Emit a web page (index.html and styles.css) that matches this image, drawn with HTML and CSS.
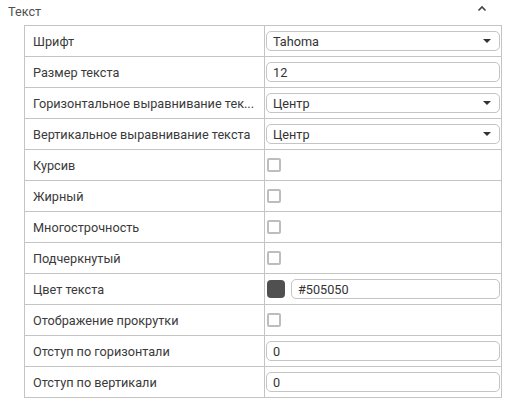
FILE: index.html
```html
<!DOCTYPE html>
<html lang="ru">
<head>
<meta charset="utf-8">
<link rel="stylesheet" href="styles.css">
</head>
<body>
<section class="group">
  <div class="group-head">
    <span class="group-title">Текст</span>
    <svg class="chev" width="10" height="7" viewBox="0 0 10 7"><path d="M1.5 5.5 L5 2 L8.5 5.5" fill="none" stroke="#444" stroke-width="1.6"/></svg>
  </div>
  <div class="props">
    <div class="row">
      <div class="name">Шрифт</div>
      <div class="val"><div class="field select"><span>Tahoma</span><i class="caret"></i></div></div>
    </div>
    <div class="row">
      <div class="name">Размер текста</div>
      <div class="val"><div class="field"><span>12</span></div></div>
    </div>
    <div class="row">
      <div class="name">Горизонтальное выравнивание тек...</div>
      <div class="val"><div class="field select"><span>Центр</span><i class="caret"></i></div></div>
    </div>
    <div class="row">
      <div class="name">Вертикальное выравнивание текста</div>
      <div class="val"><div class="field select"><span>Центр</span><i class="caret"></i></div></div>
    </div>
    <div class="row">
      <div class="name">Курсив</div>
      <div class="val"><span class="check"></span></div>
    </div>
    <div class="row">
      <div class="name">Жирный</div>
      <div class="val"><span class="check"></span></div>
    </div>
    <div class="row">
      <div class="name">Многострочность</div>
      <div class="val"><span class="check"></span></div>
    </div>
    <div class="row">
      <div class="name">Подчеркнутый</div>
      <div class="val"><span class="check"></span></div>
    </div>
    <div class="row">
      <div class="name">Цвет текста</div>
      <div class="val"><span class="swatch"></span><div class="field"><span>#505050</span></div></div>
    </div>
    <div class="row">
      <div class="name">Отображение прокрутки</div>
      <div class="val"><span class="check"></span></div>
    </div>
    <div class="row">
      <div class="name">Отступ по горизонтали</div>
      <div class="val"><div class="field"><span>0</span></div></div>
    </div>
    <div class="row">
      <div class="name">Отступ по вертикали</div>
      <div class="val"><div class="field"><span>0</span></div></div>
    </div>
  </div>
</section>
</body>
</html>
```
FILE: styles.css
```css
* { box-sizing: border-box; }

body {
  margin: 0;
  background: #fff;
  font-family: Roboto, "Liberation Sans", sans-serif;
  font-size: 12.7px;
  color: #333;
}

.group-head {
  height: 25px;
  display: flex;
  align-items: center;
  justify-content: space-between;
  padding: 0 20px 2px 8px;
}

.group-title {
  color: #505050;
}

.chev { display: block; margin-top: -6px; }

.props {
  margin-left: 24px;
  width: 478px;
  border: 1px solid #c4c4c4;
  border-bottom: 0;
}

.row {
  display: grid;
  grid-template-columns: 240px 1fr;
  height: 31px;
  border-bottom: 1px solid #c4c4c4;
}

.name {
  padding-left: 8px;
  display: flex;
  align-items: center;
  white-space: nowrap;
  overflow: hidden;
  border-right: 1px solid #c4c4c4;
  color: #3a3a3a;
}

.val {
  display: flex;
  align-items: center;
  padding: 0 1px;
  gap: 6px;
}

.field {
  flex: 1;
  height: 20px;
  border: 1px solid #c4c4c4;
  border-radius: 5px;
  display: flex;
  align-items: center;
  justify-content: space-between;
  padding: 0 8px 0 6px;
  color: #333;
}

.caret {
  width: 0;
  height: 0;
  border-left: 4px solid transparent;
  border-right: 4px solid transparent;
  border-top: 4px solid #333;
}

.check {
  width: 14px;
  height: 14px;
  border: 2px solid #bdbdbd;
  border-radius: 2px;
  margin-left: 1px;
}

.swatch {
  width: 18px;
  height: 18px;
  border-radius: 4px;
  background: #505050;
  margin-left: 1px;
}
```
